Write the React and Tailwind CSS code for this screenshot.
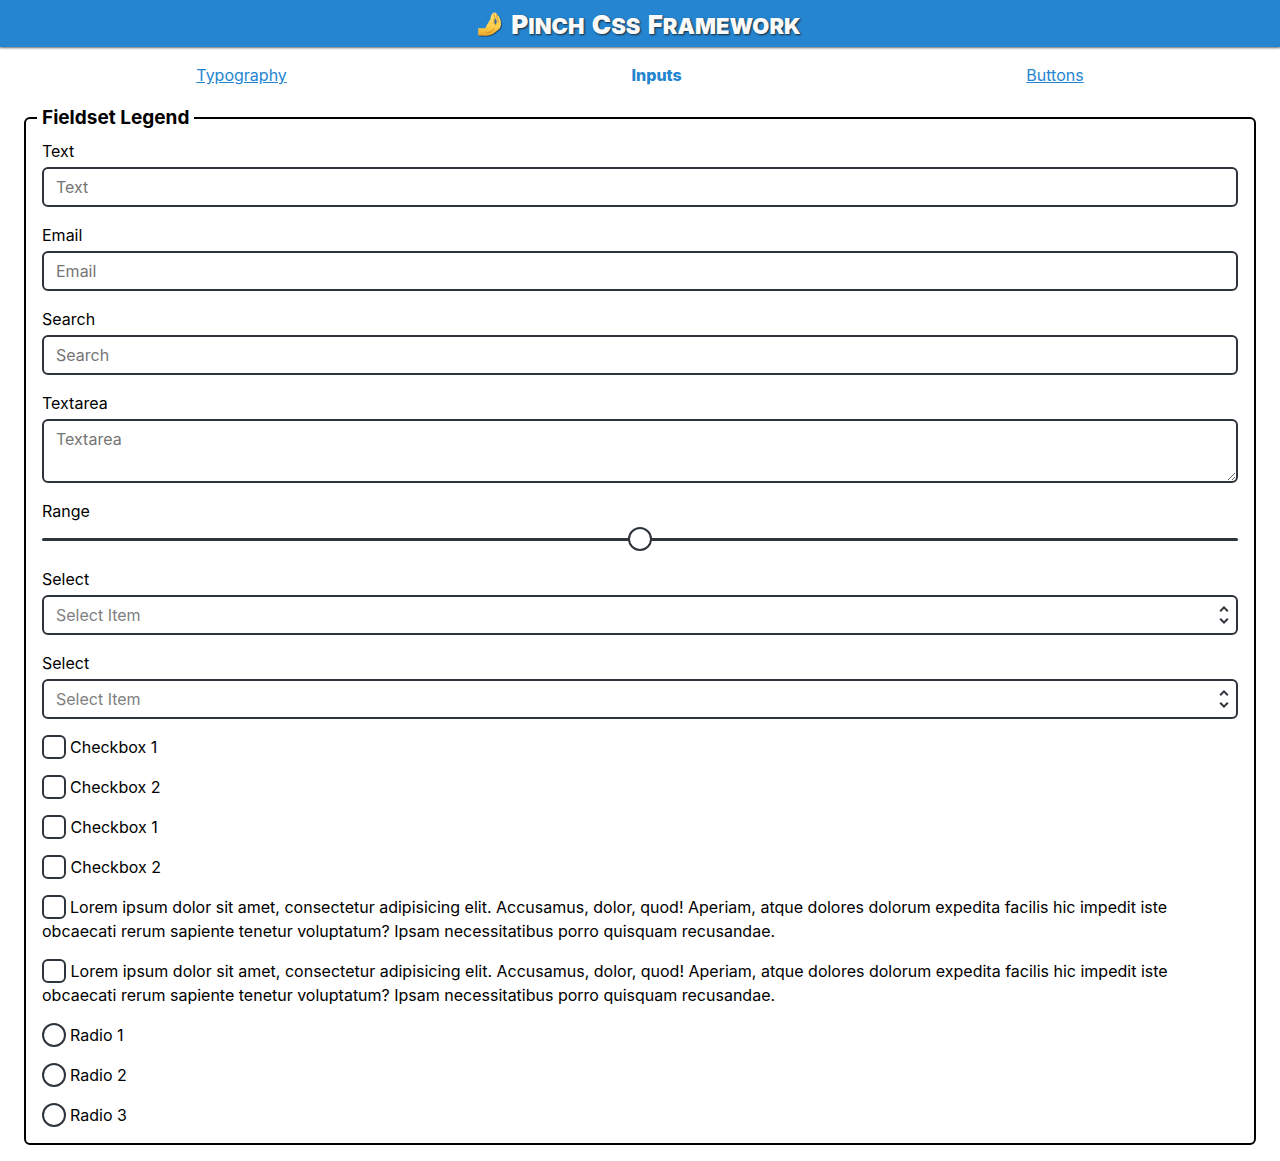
import React from "react";

const LOREM =
  "Lorem ipsum dolor sit amet, consectetur adipisicing elit. Accusamus, dolor, quod! Aperiam, atque dolores dolorum expedita facilis hic impedit iste obcaecati rerum sapiente tenetur voluptatum? Ipsam necessitatibus porro quisquam recusandae.";

const fieldClass =
  "block w-full rounded-md border-2 border-[#2e343b] bg-white px-3 py-1.5 text-base leading-6 placeholder:text-[#757575]";

const checkClass =
  "h-6 w-6 appearance-none border-2 border-[#2e343b] bg-white align-top checked:bg-[#2585d0]";

const HAND =
  "M1.200 16.300 8.200 16.200C9.400 14.600 10 12.600 11.400 10.400 12.200 9 12.800 8.400 13.400 7.200 13.600 4.400 14.600 1.600 16.400 .8 18 .2 19.600 1 20.200 2.800 22.600 5 24.200 8.400 24 12.600 23.800 15.600 22 17.800 19 19.600 16.400 22.200 13 23.600 9.600 23.800L1.200 23.600Z";

function PinchIcon() {
  return (
    <svg viewBox="0 0 26 26" className="h-[26px] w-[26px] shrink-0" aria-hidden="true">
      <defs>
        <linearGradient id="skin" x1="0" y1="0" x2="0" y2="1">
          <stop offset="0" stopColor="#ffe073" />
          <stop offset="0.65" stopColor="#fdcb4a" />
          <stop offset="1" stopColor="#eba425" />
        </linearGradient>
      </defs>
      <path d={HAND} transform="translate(1 1)" fill="#1d3f60" opacity="0.75" />
      <path d={HAND} fill="url(#skin)" />
      <path d="M18.200 6.600C20 8 20.200 11 18.800 12.600 17 12 16.600 9 18.200 6.600Z" fill="#2f6fa3" />
      <path
        d="M18.200 6.400C16.200 8.600 16.400 12.400 18.800 13M17.200 1.800C16.800 3.400 17.400 5 18.200 6.400M19.600 3.200C19.600 5.600 21 7.400 21.200 10.400M10 20.800C13 20.800 15.400 19.200 17 16.600"
        fill="none"
        stroke="#cf8a1e"
        strokeWidth="0.8"
        strokeLinecap="round"
      />
    </svg>
  );
}

function CapsWord({ children }) {
  return <span className="mr-0.5 inline-block text-[22px] uppercase first-letter:text-[26px]">{children}</span>;
}

function Field({ id, label, children }) {
  return (
    <div className="mb-4">
      <label htmlFor={id} className="mb-1 block">
        {label}
      </label>
      {children}
    </div>
  );
}

function SelectField({ id }) {
  return (
    <Field id={id} label="Select">
      <div className="relative">
        <select id={id} defaultValue="" className={fieldClass + " appearance-none text-[#808080]"}>
          <option value="">Select Item</option>
          <option value="1">Item 1</option>
          <option value="2">Item 2</option>
        </select>
        <svg
          viewBox="0 0 10 20"
          className="pointer-events-none absolute top-2.5 right-[9px] h-5 w-2.5"
          fill="none"
          stroke="#2e343b"
          strokeWidth="2"
          aria-hidden="true"
        >
          <path d="M1.200 6.200 5 2.400 8.800 6.200M1.200 13.800 5 17.600 8.800 13.800" />
        </svg>
      </div>
    </Field>
  );
}

function WrappedCheck({ children }) {
  return (
    <label className="mb-4 block">
      <input type="checkbox" className={checkClass + " mr-1 rounded-md"} />
      {children}
    </label>
  );
}

function SiblingCheck({ id, children }) {
  return (
    <div className="mb-4">
      <input id={id} type="checkbox" className={checkClass + " rounded-md"} />{" "}
      <label htmlFor={id}>{children}</label>
    </div>
  );
}

function Radio({ children, last }) {
  return (
    <label className={last ? "block" : "mb-4 block"}>
      <input type="radio" name="radio" className={checkClass + " mr-1 rounded-full"} />
      {children}
    </label>
  );
}

export default function App() {
  return (
    <div className="bg-white font-['Inter',sans-serif] text-base leading-6 text-black">
      <header className="flex items-center justify-center gap-2 bg-[#2585d0] pt-[9px] pb-1.5 shadow-[0_1px_2px_rgba(0,0,0,0.6)]">
        <PinchIcon />
        <h1 className="h-8 text-[26px] leading-8 font-black text-[#fafafa] [text-shadow:1px_1px_2px_#1d2731]">
          <CapsWord>Pinch</CapsWord> <CapsWord>Css</CapsWord> <CapsWord>Framework</CapsWord>
        </h1>
      </header>
      <nav className="flex justify-around px-6 py-4 text-[#2585d0]">
        <a href="#typography" className="underline">
          Typography
        </a>
        <a href="#inputs" className="font-extrabold">
          Inputs
        </a>
        <a href="#buttons" className="underline">
          Buttons
        </a>
      </nav>
      <main className="px-6 pb-4">
        <fieldset className="rounded-md border-2 border-black px-4 pt-1.5 pb-4">
          <legend className="-ml-[5px] px-[5px] text-[19px] leading-[30px] font-bold">Fieldset Legend</legend>
          <Field id="text" label="Text">
            <input id="text" type="text" placeholder="Text" className={fieldClass} />
          </Field>
          <Field id="email" label="Email">
            <input id="email" type="email" placeholder="Email" className={fieldClass} />
          </Field>
          <Field id="search" label="Search">
            <input id="search" type="search" placeholder="Search" className={fieldClass} />
          </Field>
          <Field id="textarea" label="Textarea">
            <textarea id="textarea" placeholder="Textarea" className={fieldClass + " h-16 resize-y"} />
          </Field>
          <Field id="range" label="Range">
            <input
              id="range"
              type="range"
              className="block h-6 w-full appearance-none bg-transparent [&::-webkit-slider-runnable-track]:h-[3px] [&::-webkit-slider-runnable-track]:rounded-full [&::-webkit-slider-runnable-track]:bg-[#2e343b] [&::-webkit-slider-thumb]:-mt-[11px] [&::-webkit-slider-thumb]:h-6 [&::-webkit-slider-thumb]:w-6 [&::-webkit-slider-thumb]:appearance-none [&::-webkit-slider-thumb]:rounded-full [&::-webkit-slider-thumb]:border-2 [&::-webkit-slider-thumb]:border-solid [&::-webkit-slider-thumb]:border-[#2e343b] [&::-webkit-slider-thumb]:bg-white"
            />
          </Field>
          <SelectField id="select-1" />
          <SelectField id="select-2" />
          <WrappedCheck>Checkbox 1</WrappedCheck>
          <WrappedCheck>Checkbox 2</WrappedCheck>
          <SiblingCheck id="check-1">Checkbox 1</SiblingCheck>
          <SiblingCheck id="check-2">Checkbox 2</SiblingCheck>
          <WrappedCheck>{LOREM}</WrappedCheck>
          <SiblingCheck id="check-3">{LOREM}</SiblingCheck>
          <Radio>Radio 1</Radio>
          <Radio>Radio 2</Radio>
          <Radio last>Radio 3</Radio>
        </fieldset>
      </main>
    </div>
  );
}
